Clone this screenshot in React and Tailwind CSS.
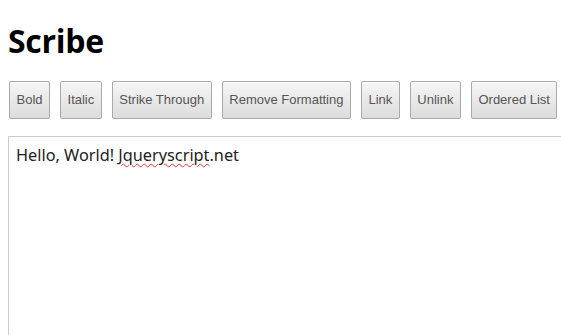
const tools = ["Bold", "Italic", "Strike Through", "Remove Formatting", "Link", "Unlink", "Ordered List"];

const ToolButton = ({ label }) => (
  <button
    type="button"
    className="shrink-0 whitespace-nowrap h-[38px] px-[6.5px] rounded-[2px] border border-[#a9a9a9] bg-gradient-to-b from-[#f6f6f6] to-[#dcdcdc] text-[13px] text-[#555] font-['Liberation_Sans',Arial,sans-serif] shadow-[inset_0_1px_0_#fff]"
  >
    {label}
  </button>
);

export default function App() {
  return (
    <div className="w-[561px] h-[335px] overflow-hidden bg-white pl-2 pt-[21px]">
      <h1 className="text-[32px] leading-[40px] font-bold text-black font-['Open_Sans','Noto_Sans',sans-serif] tracking-[-0.3px]">
        Scribe
      </h1>
      <div className="mt-[20px] flex gap-[10px] pl-px">
        {tools.map((t) => (
          <ToolButton key={t} label={t} />
        ))}
      </div>
      <div className="mt-[17px] w-[600px] h-[260px] border border-[#ccc] px-[7px] py-[8px] text-[16.3px] leading-[20px] text-[#222] font-['Noto_Sans','Open_Sans',sans-serif]">
        Hello, World!{" "}
        <span className="underline decoration-wavy decoration-red-500 decoration-1 underline-offset-2">
          Jqueryscript
        </span>
        .net
      </div>
    </div>
  );
}
